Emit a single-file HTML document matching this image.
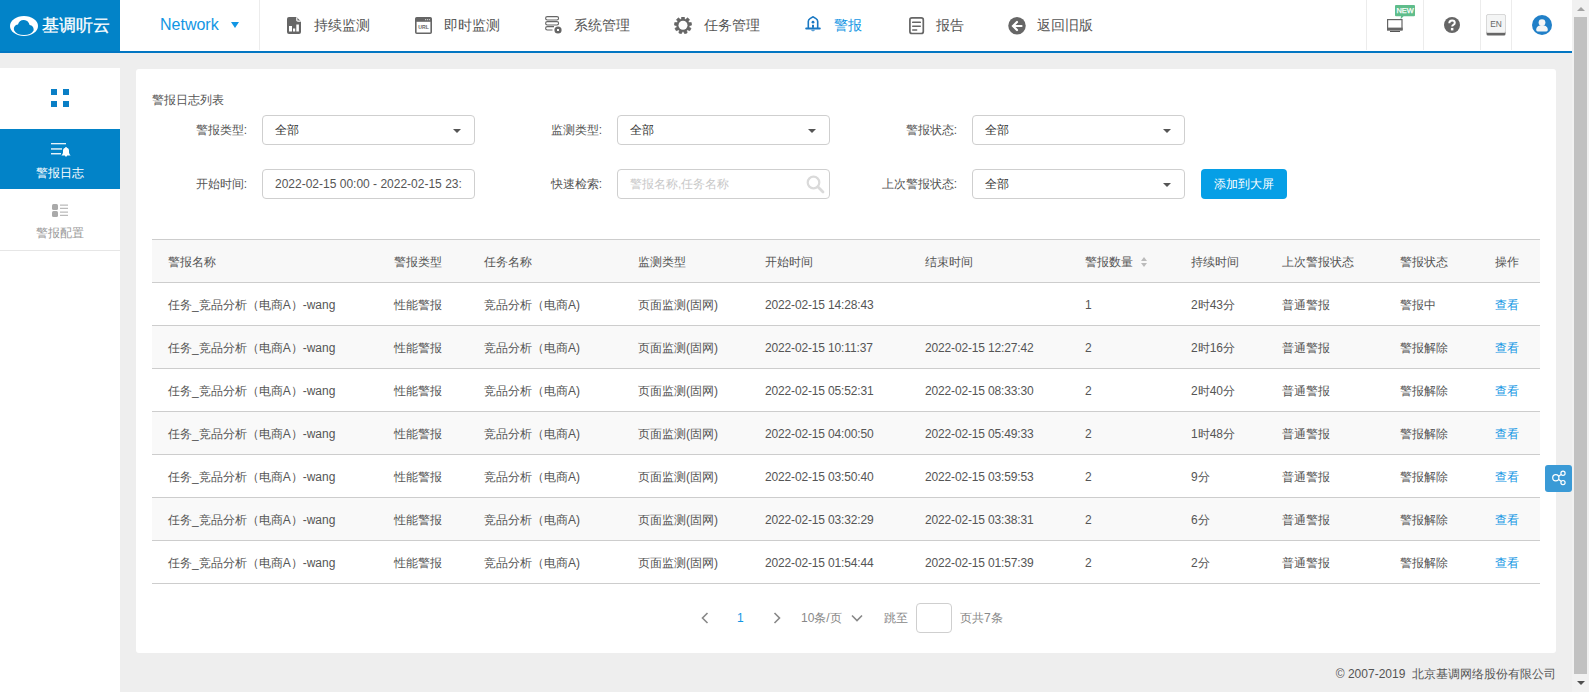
<!DOCTYPE html>
<html><head><meta charset="utf-8">
<style>
*{margin:0;padding:0;box-sizing:border-box;}
html,body{width:1589px;height:692px;overflow:hidden;background:#eeeeee;font-family:"Liberation Sans",sans-serif;color:#555;}
.abs{position:absolute;}
#hdr{position:absolute;left:0;top:0;width:1572px;height:53px;background:#fff;border-bottom:2px solid #0276c2;}
#logo{position:absolute;left:0;top:0;width:120px;height:51px;background:#0283c8;}
.sep{position:absolute;top:0;width:1px;height:50px;background:#ececec;}
.nav{position:absolute;top:16px;font-size:14px;line-height:18px;color:#555;white-space:nowrap;}
.nav svg{position:absolute;}
#side{position:absolute;left:0;top:68px;width:120px;height:624px;background:#fff;}
#card{position:absolute;left:136px;top:69px;width:1420px;height:584px;background:#fff;border-radius:3px;}
.lbl{position:absolute;font-size:12px;line-height:14px;color:#555;text-align:right;white-space:nowrap;}
.inp{position:absolute;width:213px;height:30px;border:1px solid #cfcfcf;border-radius:4px;background:#fff;font-size:12px;line-height:28px;padding-left:12px;color:#333;white-space:nowrap;overflow:hidden;}
.caret{position:absolute;right:13px;top:13px;width:0;height:0;border-left:4px solid transparent;border-right:4px solid transparent;border-top:4px solid #555;}
table{position:absolute;left:152px;top:239px;width:1388px;border-collapse:collapse;font-size:12px;color:#555;}
.sort{display:inline-block;position:relative;width:6px;height:10px;vertical-align:-1px;margin-left:5px;}
.sort:before{content:"";position:absolute;left:0;top:0;border-left:3px solid transparent;border-right:3px solid transparent;border-bottom:4px solid #bbb;}
.sort:after{content:"";position:absolute;left:0;top:6px;border-left:3px solid transparent;border-right:3px solid transparent;border-top:4px solid #bbb;}
td,th{height:43px;padding-top:2px !important;border-top:1px solid #cdcdcd;border-bottom:1px solid #cdcdcd;text-align:left;font-weight:normal;padding:0;white-space:nowrap;}
</style></head>
<body>
<div id="hdr">
  <div id="logo">
    <svg class="abs" style="left:9px;top:15px" width="30" height="22" viewBox="0 0 30 22">
      <ellipse cx="15" cy="11" rx="14" ry="10" fill="#fff"/>
      <path d="M5.2 15.5 C4.2 12.5 6 9.8 9 9.6 C9.6 6.6 12 4.8 15 5 C18 5.2 20.2 7.4 20.6 10 C23.2 10.2 25 12.6 24.6 15.4 C23 18.6 19.5 20 15 20 C10.5 20 6.8 18.6 5.2 15.5 Z" fill="#0283c8"/>
    </svg>
    <div class="abs" style="left:42px;top:15px;font-size:17px;line-height:22px;color:#fff;font-weight:normal;letter-spacing:0px;-webkit-text-stroke:0.3px #fff;white-space:nowrap">基调听云</div>
  </div>
  <div class="abs" style="left:160px;top:15px;font-size:16px;line-height:20px;color:#1296e4;">Network</div>
  <div class="abs" style="left:231px;top:22px;width:0;height:0;border-left:4px solid transparent;border-right:4px solid transparent;border-top:6px solid #1296e4;"></div>
  <div class="sep" style="left:259px"></div>

  <svg class="abs" style="left:287px;top:17px" width="14" height="17" viewBox="0 0 14 17">
    <path d="M2 0 H9.5 L14 4.5 V15 Q14 17 12 17 H2 Q0 17 0 15 V2 Q0 0 2 0 Z" fill="#666"/>
    <path d="M9.8 0.2 V3 Q9.8 4.2 11 4.2 H13.8" fill="none" stroke="#fff" stroke-width="1.2"/>
    <rect x="2" y="9" width="3" height="5.5" fill="#fff"/>
    <rect x="6" y="11.5" width="2.2" height="3" fill="#fff"/>
    <rect x="9.3" y="7.5" width="2.6" height="7" fill="#fff"/>
  </svg>
  <div class="nav" style="left:314px">持续监测</div>

  <svg class="abs" style="left:415px;top:17px" width="17" height="17" viewBox="0 0 17 17">
    <rect x="0.8" y="0.8" width="15.4" height="15.4" rx="1" fill="#fff" stroke="#666" stroke-width="1.6"/>
    <rect x="0.8" y="0.8" width="15.4" height="4" fill="#666"/>
    <rect x="10" y="2.2" width="1.2" height="1" fill="#ddd"/><rect x="12" y="2.2" width="1.2" height="1" fill="#ddd"/><rect x="14" y="2.2" width="1" height="1" fill="#ddd"/>
    <text x="8.5" y="12.3" font-family="Liberation Sans" font-size="5.2" font-weight="bold" fill="#666" text-anchor="middle">URL</text>
  </svg>
  <div class="nav" style="left:444px">即时监测</div>

  <svg class="abs" style="left:545px;top:16px" width="18" height="18" viewBox="0 0 18 18">
    <rect x="0.6" y="0.6" width="13" height="3.4" rx="1.7" fill="none" stroke="#666" stroke-width="1.1"/>
    <rect x="0.6" y="5.6" width="13" height="3.4" rx="1.7" fill="none" stroke="#666" stroke-width="1.1"/>
    <path d="M9 10.6 H2.3 A1.7 1.7 0 0 0 2.3 14 H7.5" fill="none" stroke="#666" stroke-width="1.1"/>
    <circle cx="13" cy="14" r="3.6" fill="#666"/>
    <rect x="12" y="13" width="2" height="2" fill="#fff"/>
  </svg>
  <div class="nav" style="left:574px">系统管理</div>

  <svg class="abs" style="left:674px;top:17px" width="18" height="17" viewBox="-9 -8.3 18 17"><path d="M-1.77 -5.73 L-1.30 -8.60 L1.30 -8.60 L1.77 -5.73 L2.33 -5.53 L4.53 -7.43 L6.53 -5.75 L5.04 -3.25 L5.34 -2.74 L8.25 -2.77 L8.70 -0.21 L5.95 0.75 L5.85 1.33 L8.10 3.18 L6.80 5.43 L4.08 4.40 L3.63 4.78 L4.16 7.64 L1.72 8.53 L0.29 5.99 L-0.29 5.99 L-1.72 8.53 L-4.16 7.64 L-3.63 4.78 L-4.08 4.40 L-6.80 5.43 L-8.10 3.18 L-5.85 1.33 L-5.95 0.75 L-8.70 -0.21 L-8.25 -2.77 L-5.34 -2.74 L-5.04 -3.25 L-6.53 -5.75 L-4.53 -7.43 L-2.33 -5.53 Z" fill="#666" stroke="#666" stroke-width="0.6" stroke-linejoin="round"/><circle r="6.3" fill="#666"/><circle r="4.5" fill="#fff"/></svg>
  <div class="nav" style="left:704px">任务管理</div>

  <svg class="abs" style="left:805px;top:16px" width="16" height="16" viewBox="0 0 16 16">
    <path d="M3.3 13 V5.5 Q3.3 3.6 5 2.6 L8 0.8 L11 2.6 Q12.7 3.6 12.7 5.5 V13" fill="none" stroke="#1a78c2" stroke-width="1.6"/>
    <rect x="0.2" y="11.6" width="15.6" height="1.8" rx="0.9" fill="#1a78c2"/>
    <circle cx="8" cy="6.2" r="1.4" fill="#1a78c2"/>
    <rect x="7" y="8.8" width="2" height="3" fill="#1a78c2"/>
    <path d="M6.2 13.4 H9.8 V14.6 Q8 16.2 6.2 14.6 Z" fill="#5b9fd6"/>
  </svg>
  <div class="nav" style="left:834px;color:#1296e4">警报</div>

  <svg class="abs" style="left:909px;top:17px" width="16" height="18" viewBox="0 0 16 18">
    <rect x="0.9" y="0.9" width="13.4" height="15.6" rx="2" fill="none" stroke="#666" stroke-width="1.7"/>
    <rect x="3" y="4.6" width="9" height="1.5" rx="0.7" fill="#666"/>
    <rect x="3" y="8.4" width="9" height="1.5" rx="0.7" fill="#666"/>
    <rect x="3" y="12.2" width="5.4" height="1.5" rx="0.7" fill="#666"/>
  </svg>
  <div class="nav" style="left:936px">报告</div>

  <svg class="abs" style="left:1008px;top:17px" width="18" height="18" viewBox="0 0 18 18">
    <circle cx="9" cy="8.75" r="8.75" fill="#666"/>
    <path d="M13.5 9 H6 M9 5 L5 9 L9 13" fill="none" stroke="#fff" stroke-width="2.2" stroke-linejoin="miter" stroke-linecap="round"/>
  </svg>
  <div class="nav" style="left:1037px">返回旧版</div>

  <div class="sep" style="left:1366px"></div>
  <div class="sep" style="left:1423px"></div>
  <div class="sep" style="left:1480px"></div>
  <div class="sep" style="left:1511px"></div>

  <svg class="abs" style="left:1386px;top:4px" width="32" height="30" viewBox="0 0 32 30">
    <path d="M10 1 H28 Q29 1 29 2 V11.2 Q29 12.2 28 12.2 H17.6 L14.6 15.2 L15 12.2 H10 Q9 12.2 9 11.2 V2 Q9 1 10 1 Z" fill="#5fbd8b"/>
    <text x="19" y="9.2" font-family="Liberation Sans" font-size="7.4" fill="#fff" stroke="#fff" stroke-width="0.25" text-anchor="middle">NEW</text>
    <rect x="1.6" y="15.6" width="14.4" height="10.4" fill="none" stroke="#666" stroke-width="1.2"/>
    <rect x="1" y="23.6" width="15.6" height="2.6" fill="#666"/>
    <rect x="4" y="27" width="10" height="1" fill="#555"/>
  </svg>

  <svg class="abs" style="left:1444px;top:17px" width="16" height="16" viewBox="0 0 16 16">
    <circle cx="8" cy="8" r="8" fill="#666"/>
    <path d="M5.3 6.2 Q5.3 3.4 8.1 3.4 Q10.8 3.4 10.8 5.8 Q10.8 7.2 9.4 7.9 Q8.2 8.5 8.2 9.6" fill="none" stroke="#fff" stroke-width="2"/>
    <rect x="6.9" y="10.9" width="2.5" height="2.5" fill="#fff"/>
  </svg>

  <svg class="abs" style="left:1486px;top:14px" width="20" height="22" viewBox="0 0 20 22">
    <rect x="0.5" y="0.5" width="19" height="21" rx="1.5" fill="#666"/>
    <rect x="0.5" y="0.5" width="19" height="18" rx="1.5" fill="#f4f5f5" stroke="#d8d8d8" stroke-width="1"/>
    <text x="10" y="13.2" font-family="Liberation Sans" font-size="8.4" fill="#666" text-anchor="middle">EN</text>
  </svg>

  <svg class="abs" style="left:1532px;top:15px" width="20" height="20" viewBox="0 0 20 20">
    <circle cx="10" cy="10" r="10" fill="#2180c8"/>
    <circle cx="10" cy="7.6" r="3.4" fill="#f4f5f5"/>
    <path d="M4.2 14.8 Q4.2 11 8 10.4 H12 Q15.8 11 15.8 14.8 Q15.8 16.4 14.4 16.4 H5.6 Q4.2 16.4 4.2 14.8 Z" fill="#f4f5f5"/>
  </svg>
</div>
<div id="side">
  <div class="abs" style="left:51px;top:21px;width:6px;height:6px;background:#0a7fc6"></div>
  <div class="abs" style="left:63px;top:21px;width:6px;height:6px;background:#0a7fc6"></div>
  <div class="abs" style="left:51px;top:33px;width:6px;height:6px;background:#0a7fc6"></div>
  <div class="abs" style="left:63px;top:33px;width:6px;height:6px;background:#0a7fc6"></div>
  <div class="abs" style="left:0;top:61px;width:120px;height:60px;background:#0283c8">
    <svg class="abs" style="left:50px;top:14px" width="22" height="14" viewBox="0 0 22 14">
      <rect x="1" y="0.1" width="15" height="1.2" fill="#fff"/>
      <rect x="1" y="5.3" width="11" height="1.3" fill="#fff"/>
      <rect x="1" y="10.1" width="10" height="1.3" fill="#fff"/>
      <path d="M11.4 12.4 Q12.9 11.4 13 9.6 V7.6 Q13 5.2 16 4.6 Q19 5.2 19 7.6 V9.6 Q19.1 11.4 20.6 12.4 Z" fill="#fff"/>
      <rect x="15.4" y="4" width="1.2" height="1.2" fill="#fff"/>
      <circle cx="16" cy="12.6" r="1.1" fill="#fff"/>
    </svg>
    <div class="abs" style="left:0;top:37px;width:120px;text-align:center;font-size:12px;line-height:14px;color:#fff">警报日志</div>
  </div>
  <svg class="abs" style="left:52px;top:136px" width="17" height="13" viewBox="0 0 17 13">
    <rect x="0" y="0" width="6" height="6" rx="1.5" fill="#aaa"/>
    <rect x="0" y="7" width="6" height="6" rx="1.5" fill="#aaa"/>
    <rect x="8" y="0.6" width="8" height="1" fill="#aaa"/>
    <rect x="8" y="3.8" width="8" height="1" fill="#aaa"/>
    <rect x="8" y="7.6" width="8" height="1" fill="#aaa"/>
    <rect x="8" y="10.8" width="8" height="1" fill="#aaa"/>
  </svg>
  <div class="abs" style="left:0;top:158px;width:120px;text-align:center;font-size:12px;line-height:14px;color:#999">警报配置</div>
  <div class="abs" style="left:0;top:182px;width:120px;height:1px;background:#e6e6e6"></div>
</div>
<div id="card">
  <div class="abs" style="left:16px;top:24px;font-size:12px;line-height:14px;color:#555">警报日志列表</div>
</div>
<div class="lbl" style="left:150px;width:97px;top:123px">警报类型:</div>
<div class="inp" style="left:262px;top:115px">全部<div class="caret"></div></div>
<div class="lbl" style="left:150px;width:97px;top:177px">开始时间:</div>
<div class="inp" style="left:262px;top:169px;color:#555"><span style="display:block;width:187px;overflow:hidden">2022-02-15 00:00 - 2022-02-15 23:59</span></div>
<div class="lbl" style="left:500px;width:102px;top:123px">监测类型:</div>
<div class="inp" style="left:617px;top:115px">全部<div class="caret"></div></div>
<div class="lbl" style="left:500px;width:102px;top:177px">快速检索:</div>
<div class="inp" style="left:617px;top:169px;color:#c8c8c8">警报名称,任务名称
  <svg class="abs" style="left:188px;top:5px" width="19" height="19" viewBox="0 0 19 19"><circle cx="7.5" cy="7.5" r="5.8" fill="none" stroke="#dadada" stroke-width="2.2"/><path d="M11.8 11.8 L17 17" stroke="#dadada" stroke-width="2.8" stroke-linecap="round"/></svg>
</div>
<div class="lbl" style="left:850px;width:107px;top:123px">警报状态:</div>
<div class="inp" style="left:972px;top:115px">全部<div class="caret"></div></div>
<div class="lbl" style="left:850px;width:107px;top:177px">上次警报状态:</div>
<div class="inp" style="left:972px;top:169px">全部<div class="caret"></div></div>
<div class="abs" style="left:1201px;top:169px;width:86px;height:30px;background:#069fe6;border-radius:4px;color:#fff;font-size:12px;line-height:30px;text-align:center">添加到大屏</div>

<table>
<colgroup><col style="width:242px"><col style="width:90px"><col style="width:154px"><col style="width:127px"><col style="width:160px"><col style="width:160px"><col style="width:106px"><col style="width:91px"><col style="width:118px"><col style="width:95px"><col></colgroup>
<tr style="background:#f8f8f8"><th style="padding-left:16px">警报名称</th><th>警报类型</th><th>任务名称</th><th>监测类型</th><th>开始时间</th><th>结束时间</th><th>警报数量 <span class="sort"></span></th><th>持续时间</th><th>上次警报状态</th><th>警报状态</th><th>操作</th></tr>
<tr><td style="padding-left:16px">任务_竞品分析（电商A）-wang</td><td>性能警报</td><td>竞品分析（电商A)</td><td>页面监测(固网)</td><td style="letter-spacing:-0.15px">2022-02-15 14:28:43</td><td></td><td>1</td><td>2时43分</td><td>普通警报</td><td>警报中</td><td style="color:#1296e4">查看</td></tr>
<tr style="background:#f9f9f9"><td style="padding-left:16px">任务_竞品分析（电商A）-wang</td><td>性能警报</td><td>竞品分析（电商A)</td><td>页面监测(固网)</td><td style="letter-spacing:-0.15px">2022-02-15 10:11:37</td><td style="letter-spacing:-0.15px">2022-02-15 12:27:42</td><td>2</td><td>2时16分</td><td>普通警报</td><td>警报解除</td><td style="color:#1296e4">查看</td></tr>
<tr><td style="padding-left:16px">任务_竞品分析（电商A）-wang</td><td>性能警报</td><td>竞品分析（电商A)</td><td>页面监测(固网)</td><td style="letter-spacing:-0.15px">2022-02-15 05:52:31</td><td style="letter-spacing:-0.15px">2022-02-15 08:33:30</td><td>2</td><td>2时40分</td><td>普通警报</td><td>警报解除</td><td style="color:#1296e4">查看</td></tr>
<tr style="background:#f9f9f9"><td style="padding-left:16px">任务_竞品分析（电商A）-wang</td><td>性能警报</td><td>竞品分析（电商A)</td><td>页面监测(固网)</td><td style="letter-spacing:-0.15px">2022-02-15 04:00:50</td><td style="letter-spacing:-0.15px">2022-02-15 05:49:33</td><td>2</td><td>1时48分</td><td>普通警报</td><td>警报解除</td><td style="color:#1296e4">查看</td></tr>
<tr><td style="padding-left:16px">任务_竞品分析（电商A）-wang</td><td>性能警报</td><td>竞品分析（电商A)</td><td>页面监测(固网)</td><td style="letter-spacing:-0.15px">2022-02-15 03:50:40</td><td style="letter-spacing:-0.15px">2022-02-15 03:59:53</td><td>2</td><td>9分</td><td>普通警报</td><td>警报解除</td><td style="color:#1296e4">查看</td></tr>
<tr style="background:#f9f9f9"><td style="padding-left:16px">任务_竞品分析（电商A）-wang</td><td>性能警报</td><td>竞品分析（电商A)</td><td>页面监测(固网)</td><td style="letter-spacing:-0.15px">2022-02-15 03:32:29</td><td style="letter-spacing:-0.15px">2022-02-15 03:38:31</td><td>2</td><td>6分</td><td>普通警报</td><td>警报解除</td><td style="color:#1296e4">查看</td></tr>
<tr><td style="padding-left:16px">任务_竞品分析（电商A）-wang</td><td>性能警报</td><td>竞品分析（电商A)</td><td>页面监测(固网)</td><td style="letter-spacing:-0.15px">2022-02-15 01:54:44</td><td style="letter-spacing:-0.15px">2022-02-15 01:57:39</td><td>2</td><td>2分</td><td>普通警报</td><td>警报解除</td><td style="color:#1296e4">查看</td></tr>
</table>

<div class="abs" style="left:700px;top:612px">
</div>
<svg class="abs" style="left:700px;top:612px" width="10" height="12" viewBox="0 0 10 12"><path d="M7.5 1 L2.5 6 L7.5 11" fill="none" stroke="#888" stroke-width="1.6"/></svg>
<div class="abs" style="left:737px;top:611px;font-size:12px;line-height:14px;color:#1296e4">1</div>
<svg class="abs" style="left:772px;top:612px" width="10" height="12" viewBox="0 0 10 12"><path d="M2.5 1 L7.5 6 L2.5 11" fill="none" stroke="#888" stroke-width="1.6"/></svg>
<div class="abs" style="left:801px;top:611px;font-size:12px;line-height:14px;color:#888">10条/页</div>
<svg class="abs" style="left:851px;top:614px" width="12" height="9" viewBox="0 0 12 9"><path d="M1 1.5 L6 6.5 L11 1.5" fill="none" stroke="#888" stroke-width="1.6"/></svg>
<div class="abs" style="left:884px;top:611px;font-size:12px;line-height:14px;color:#888">跳至</div>
<div class="abs" style="left:916px;top:603px;width:36px;height:30px;border:1px solid #cfcfcf;border-radius:4px;background:#fff"></div>
<div class="abs" style="left:960px;top:611px;font-size:12px;line-height:14px;color:#888">页共7条</div>

<div class="abs" style="left:1300px;top:667px;width:256px;text-align:right;font-size:12px;line-height:14px;color:#555;white-space:nowrap">© 2007-2019 &nbsp;北京基调网络股份有限公司</div>

<div class="abs" style="left:1545px;top:465px;width:27px;height:27px;background:#3a9ad6;border-radius:3px">
  <svg class="abs" style="left:0;top:0" width="27" height="27" viewBox="0 0 27 27"><circle cx="10.8" cy="12.8" r="3.1" fill="none" stroke="#fff" stroke-width="1.2"/><circle cx="18" cy="8.3" r="2.1" fill="none" stroke="#fff" stroke-width="1.2"/><circle cx="18" cy="17.6" r="2.1" fill="none" stroke="#fff" stroke-width="1.2"/><path d="M13.7 11.2 L16.1 9.6 M13.7 14.4 L16.1 16.2" stroke="#fff" stroke-width="1.2"/></svg>
</div>

<div class="abs" style="left:1572px;top:0;width:17px;height:692px;background:#f1f1f1"></div>
<div class="abs" style="left:1574px;top:17px;width:13px;height:657px;background:#c1c1c1"></div>
<div class="abs" style="left:1576.5px;top:7px;width:0;height:0;border-left:4px solid transparent;border-right:4px solid transparent;border-bottom:4px solid #a3a3a3"></div>
<div class="abs" style="left:1576.5px;top:681px;width:0;height:0;border-left:4px solid transparent;border-right:4px solid transparent;border-top:4px solid #505050"></div>

</body></html>
